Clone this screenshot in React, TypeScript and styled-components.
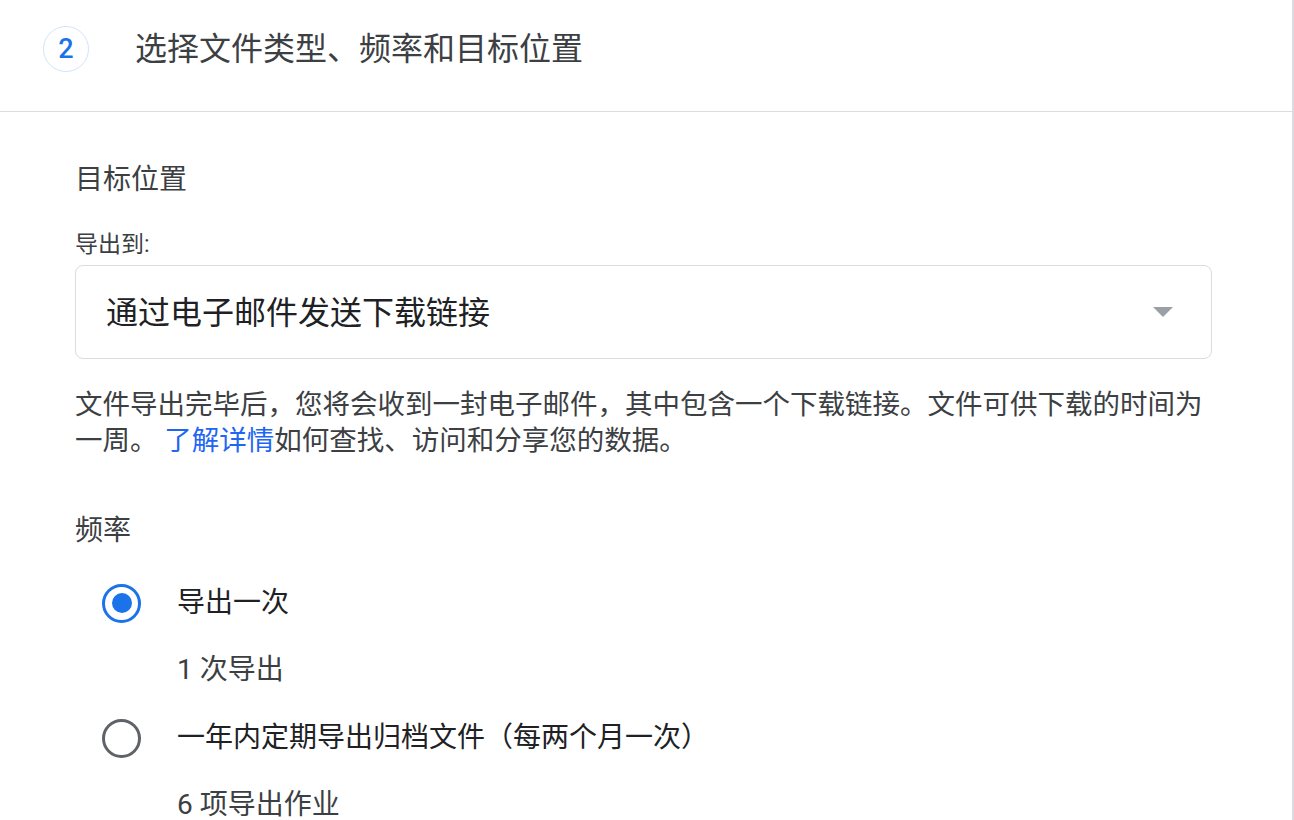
import * as React from "react";
import styled, { createGlobalStyle } from "styled-components";

const GlobalStyle = createGlobalStyle`
  body {
    margin: 0;
    background: #ffffff;
    font-family: Roboto, "Noto Sans CJK SC", sans-serif;
  }
`;

const Panel = styled.div`
  box-sizing: border-box;
  width: 1294px;
  min-height: 820px;
  border-right: 2px solid #dadce0;
  background: #ffffff;
  overflow: hidden;
`;

const Header = styled.div`
  display: flex;
  align-items: center;
  gap: 46px;
  padding: 26px 0 39px 43px;
  border-bottom: 1px solid #dadce0;
`;

const StepCircle = styled.div`
  box-sizing: border-box;
  width: 46px;
  height: 46px;
  border: 1px solid #d2e3fc;
  border-radius: 50%;
  display: flex;
  align-items: center;
  justify-content: center;
  color: #1a73e8;
  font-size: 27px;
  font-weight: 500;
`;

const Title = styled.h2`
  margin: 0;
  font-size: 32px;
  font-weight: 400;
  line-height: 46px;
  color: #3c4043;
`;

const Body = styled.div`
  padding: 48px 80px 0 75px;
  display: flex;
  flex-direction: column;
`;

const SectionTitle = styled.div<{ $gap?: number }>`
  margin-top: ${(p) => p.$gap ?? 0}px;
  font-size: 28px;
  line-height: 40px;
  color: #3c4043;
`;

const FieldLabel = styled.div`
  margin-top: 30px;
  font-size: 23px;
  line-height: 30px;
  color: #3c4043;
`;

const Select = styled.div`
  box-sizing: border-box;
  margin-top: 5px;
  height: 94px;
  display: flex;
  align-items: center;
  justify-content: space-between;
  padding: 0 38px 4px 30px;
  border: 1px solid #dadce0;
  border-radius: 8px;
  font-size: 32px;
  color: #202124;

  svg {
    margin-top: 4px;
  }
`;

const Description = styled.p`
  margin: 28px 0 0;
  font-size: 27.5px;
  line-height: 36px;
  color: #3c4043;
`;

const Link = styled.a`
  color: #1f66f2;
  text-decoration: none;
`;

const Options = styled.div`
  margin-top: 32px;
  display: flex;
  flex-direction: column;
`;

const Option = styled.div<{ $first?: boolean }>`
  display: flex;
  flex-direction: column;
  margin-top: ${(p) => (p.$first ? 0 : 28)}px;
`;

const OptionRow = styled.div`
  display: flex;
  align-items: center;
  gap: 36px;
  height: 40px;
  padding-left: 27px;
`;

const Radio = styled.span<{ $checked?: boolean }>`
  box-sizing: border-box;
  flex: none;
  width: 39px;
  height: 39px;
  border-radius: 50%;
  border: 3px solid ${(p) => (p.$checked ? "#1a73e8" : "#5f6368")};
  display: flex;
  align-items: center;
  justify-content: center;

  &::after {
    content: "";
    display: ${(p) => (p.$checked ? "block" : "none")};
    width: 20px;
    height: 20px;
    border-radius: 50%;
    background: #1a73e8;
  }
`;

const OptionLabel = styled.span`
  font-size: 28px;
  line-height: 40px;
  color: #202124;
`;

const OptionNote = styled.div`
  margin-top: 27px;
  padding-left: 102px;
  font-size: 28px;
  line-height: 40px;
  color: #3c4043;
`;

const DropArrow = () => (
  <svg width="20" height="10" viewBox="0 0 20 10">
    <path d="M0 0 L20 0 L10 10 Z" fill="#9aa0a6" />
  </svg>
);

const frequencies = [
  { label: "导出一次", note: "1 次导出", checked: true },
  { label: "一年内定期导出归档文件（每两个月一次）", note: "6 项导出作业", checked: false },
];

const App = () => {
  return (
    <>
      <GlobalStyle />
      <Panel>
        <Header>
          <StepCircle>2</StepCircle>
          <Title>选择文件类型、频率和目标位置</Title>
        </Header>
        <Body>
          <SectionTitle>目标位置</SectionTitle>
          <FieldLabel>导出到:</FieldLabel>
          <Select>
            <span>通过电子邮件发送下载链接</span>
            <DropArrow />
          </Select>
          <Description>
            文件导出完毕后，您将会收到一封电子邮件，其中包含一个下载链接。文件可供下载的时间为一周。{" "}
            <Link href="#">了解详情</Link>如何查找、访问和分享您的数据。
          </Description>
          <SectionTitle $gap={52}>频率</SectionTitle>
          <Options>
            {frequencies.map((f, i) => (
              <Option key={f.label} $first={i === 0}>
                <OptionRow>
                  <Radio $checked={f.checked} />
                  <OptionLabel>{f.label}</OptionLabel>
                </OptionRow>
                <OptionNote>{f.note}</OptionNote>
              </Option>
            ))}
          </Options>
        </Body>
      </Panel>
    </>
  );
};

export default App;
